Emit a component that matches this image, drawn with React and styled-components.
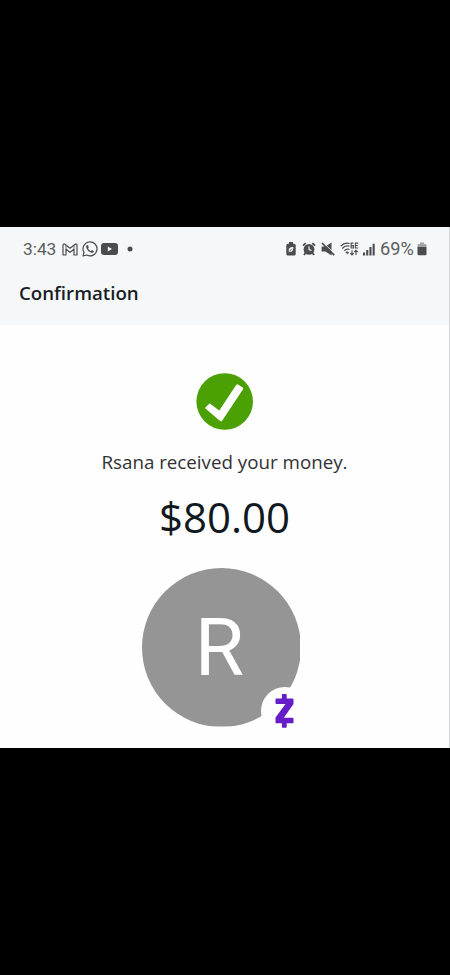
import React from "react";
import styled, { createGlobalStyle } from "styled-components";

const GlobalStyle = createGlobalStyle`
  * {
    box-sizing: border-box;
  }
  body {
    margin: 0;
    background: #000;
    font-family: "Open Sans", "Noto Sans", sans-serif;
  }
`;

const StyledPage = styled.div`
  display: flex;
  flex-direction: column;
  height: 975px;
  padding: 227px 0;
  background: #000;
`;

const StyledScreen = styled.section`
  display: flex;
  flex-direction: column;
  flex: 1;
  min-height: 0;
  background: #fefefe;
  border-right: 1px solid #d3d6d8;
`;

const StyledHeader = styled.header`
  flex: none;
  height: 98px;
  background: #f5f7f9;
`;

const StyledStatusBar = styled.div`
  display: flex;
  justify-content: space-between;
  height: 44px;
  padding: 0 22px 0 23px;
`;

const StyledGroup = styled.div`
  display: flex;
  align-items: center;
`;

const StyledStatusText = styled.span`
  width: ${({ $width }) => $width}px;
  margin-right: ${({ $gap }) => $gap}px;
  color: #5c5d60;
  font-family: Roboto, sans-serif;
  font-size: ${({ $size }) => $size}px;
  line-height: 20px;
  white-space: nowrap;
`;

const StyledIcon = styled.svg`
  display: block;
  flex: none;
  margin-right: ${({ $gap = 0 }) => $gap}px;
  color: #4b4c4f;
`;

const StyledTitle = styled.h1`
  margin: 9px 0 0 19px;
  color: #191d26;
  font-size: 18.7px;
  font-weight: 600;
  line-height: 26px;
`;

const StyledContent = styled.main`
  display: flex;
  flex-direction: column;
  align-items: center;
  padding-top: 48px;
`;

const StyledMessage = styled.p`
  margin: 19px 0 0;
  color: #303135;
  font-size: 18.75px;
  line-height: 26px;
  white-space: nowrap;
`;

const StyledAmount = styled.p`
  margin: 13px 0 0;
  color: #111820;
  font-size: 42px;
  line-height: 58px;
`;

const StyledAvatar = styled.div`
  position: relative;
  width: 159px;
  height: 159px;
  margin: 22px 7px 0 0;
`;

const StyledInitial = styled.div`
  display: flex;
  align-items: center;
  justify-content: center;
  width: 159px;
  height: 159px;
  padding: 1px 3px 0 0;
  border-radius: 50%;
  clip-path: inset(0 0.5px 0.5px 0);
  background: #959595;
  color: #fff;
  font-family: Roboto, sans-serif;
  font-size: 80px;
  line-height: 94px;
`;

const StyledBadge = styled.div`
  position: absolute;
  left: 119px;
  top: 119px;
  display: flex;
  align-items: center;
  justify-content: center;
  width: 48px;
  height: 48px;
  border-radius: 50%;
  background: #fefefe;
`;

function GmailIcon() {
  return (
    <StyledIcon $gap={4} width="16" height="13" viewBox="0 0 16 13" fill="none" stroke="currentColor" strokeWidth="1.2" strokeLinejoin="round">
      <path d="M1 2.2Q1 .6 2.5 1L8 5.2 13.5 1Q15 .6 15 2.2V12H12V6.3L8 9.3 4 6.3V12H1Z" />
      <path d="M4 2.2V6.3M12 2.2V6.3" strokeWidth=".8" />
    </StyledIcon>
  );
}

function WhatsAppIcon() {
  return (
    <StyledIcon $gap={3} width="16" height="16" viewBox="0 0 16 16" fill="none">
      <path d="M1 15 2 11.4A7 7 0 1 1 4.7 14Z" stroke="currentColor" strokeWidth="1.2" strokeLinejoin="round" />
      <path d="M5.4 4.1C4.8 4 4.1 5 4.2 6.1 4.6 8.7 7.1 11.4 9.8 11.8 11 11.9 12 11 11.9 10.2L10 9.1 9 10.1C7.9 9.7 6.6 8.4 6.1 7.2L6.8 6.3 6.1 4.4Z" fill="currentColor" />
    </StyledIcon>
  );
}

function YouTubeIcon() {
  return (
    <StyledIcon $gap={9} width="17" height="12" viewBox="0 0 17 12">
      <rect width="17" height="12" rx="3" fill="currentColor" />
      <path d="M6.8 3.5V8.5L11 6Z" fill="#f5f7f9" />
    </StyledIcon>
  );
}

function DotIcon() {
  return (
    <StyledIcon width="6" height="6" viewBox="0 0 6 6">
      <circle cx="3" cy="3" r="2.5" fill="currentColor" />
    </StyledIcon>
  );
}

function BatterySaverIcon() {
  return (
    <StyledIcon $gap={6} width="10" height="14" viewBox="0 0 10 14">
      <path d="M3 0H7V1.8H8.2Q9.7 1.8 9.7 3.3V12Q9.7 13.5 8.2 13.5H1.8Q.3 13.5.3 12V3.3Q.3 1.8 1.8 1.8H3Z" fill="currentColor" />
      <path d="M2.8 8.7C2.2 6.3 4 5.2 7.4 5 7.4 8.6 6.1 10.4 3.7 9.6L2.7 10.7Z" fill="#f5f7f9" />
      <path d="M3.5 9.2 5.8 6.8" stroke="currentColor" strokeWidth=".7" />
    </StyledIcon>
  );
}

function AlarmIcon() {
  return (
    <StyledIcon $gap={5} width="14" height="14" viewBox="0 0 14 14">
      <circle cx="7" cy="7.4" r="5.4" fill="currentColor" />
      <path d="M1 3.7 3.7 1.2M10.3 1.2 13 3.7M3.4 11 2 13M10.6 11 12 13" stroke="currentColor" strokeWidth="1.8" />
      <path d="M7 4.3V7.6L9.5 8.5" stroke="#f5f7f9" strokeWidth="1.1" fill="none" />
    </StyledIcon>
  );
}

function MuteIcon() {
  return (
    <StyledIcon $gap={5} width="14" height="14" viewBox="0 0 14 14">
      <path d="M.6 4.6H4.4L10.5.6V13.4L4.4 9.6H.6Z" fill="currentColor" />
      <path d="M2.2.6 14 12" stroke="#f5f7f9" strokeWidth="1" />
      <path d="M1 1 13.2 13.2" stroke="currentColor" strokeWidth="1.7" />
    </StyledIcon>
  );
}

function WifiIcon() {
  return (
    <StyledIcon $gap={4} width="19" height="16" viewBox="0 0 19 16">
      <g fill="none" stroke="currentColor" strokeWidth="1.2">
        <path d="M.7 5.2C3.2 2.4 6.4 1.5 9.6 2.5M2.3 7.5C4.4 5.1 7 4.5 9.5 5.3M4.2 9.8C5.8 8.2 7.7 7.8 9.5 8.5" />
        <path d="M13.4 2.1H11.1V7H13.4V4.6H11.1M18.2 2.1H15.4V7H18.2M15.4 4.5H17.9" strokeWidth="1.1" />
        <path d="M12 9.2V14M10.2 12.2 12 14 13.8 12.2M16 14V9.2M14.2 11 16 9.2 17.8 11" strokeWidth="1.1" />
      </g>
      <path d="M5.4 11.2Q7.3 9.8 9.1 11.2L7.3 13.2Z" fill="currentColor" />
    </StyledIcon>
  );
}

function SignalIcon() {
  return (
    <StyledIcon $gap={5} width="12" height="13" viewBox="0 0 12 13" fill="currentColor">
      <path d="M0 9.5H2.1V12.5H0ZM3.2 7H5.3V12.5H3.2ZM6.4 4H8.5V12.5H6.4ZM9.6.8H11.7V12.5H9.6Z" />
    </StyledIcon>
  );
}

function BatteryIcon() {
  return (
    <StyledIcon width="10" height="14" viewBox="0 0 10 14">
      <path d="M3 .5H7V2H8.2Q9.5 2 9.5 3.3V5H.5V3.3Q.5 2 1.8 2H3Z" fill="#a3a4a6" />
      <path d="M.5 5H9.5V12Q9.5 13.3 8.2 13.3H1.8Q.5 13.3.5 12Z" fill="currentColor" />
    </StyledIcon>
  );
}

function SuccessIcon() {
  return (
    <StyledIcon width="57" height="57" viewBox="0 0 57 57">
      <circle cx="28.7" cy="28.5" r="28.3" fill="#4ba003" />
      <path d="M9.7 34.2 13 30.9Q13.7 30.3 14.5 30.9L23.3 37.6 40.3 11.8Q41 10.9 41.9 11.5L46.7 14.6Q47.6 15.3 47 16.2L26.1 47.7Q25.3 48.9 24.1 47.9L9.7 35.7Q8.9 35 9.7 34.2Z" fill="#fff" />
    </StyledIcon>
  );
}

function ZelleIcon() {
  return (
    <StyledIcon width="20" height="34" viewBox="0 0 20 34">
      <path d="M7.6 0H11Q11.7 0 11.7.7V4.4H17.6Q18.5 4.4 18.5 5.3V10L8.8 23.7H17.6Q18.5 23.7 18.5 24.6V28.4Q18.5 29.3 17.6 29.3H11.7V33.1Q11.7 33.8 11 33.8H7.6Q6.9 33.8 6.9 33.1V29.3H1.4Q.5 29.3.5 28.4V23.5L10.5 10H1.4Q.5 10 .5 9.1V5.3Q.5 4.4 1.4 4.4H6.9V.7Q6.9 0 7.6 0Z" fill="#651dc8" />
    </StyledIcon>
  );
}

export default function App() {
  return (
    <>
      <GlobalStyle />
      <StyledPage>
        <StyledScreen>
          <StyledHeader>
            <StyledStatusBar>
              <StyledGroup>
                <StyledStatusText $width={34} $gap={5} $size={17.3}>
                  3:43
                </StyledStatusText>
                <GmailIcon />
                <WhatsAppIcon />
                <YouTubeIcon />
                <DotIcon />
              </StyledGroup>
              <StyledGroup>
                <BatterySaverIcon />
                <AlarmIcon />
                <MuteIcon />
                <WifiIcon />
                <SignalIcon />
                <StyledStatusText $width={35} $gap={2} $size={18.2}>
                  69%
                </StyledStatusText>
                <BatteryIcon />
              </StyledGroup>
            </StyledStatusBar>
            <StyledTitle>Confirmation</StyledTitle>
          </StyledHeader>
          <StyledContent>
            <SuccessIcon />
            <StyledMessage>Rsana received your money.</StyledMessage>
            <StyledAmount>$80.00</StyledAmount>
            <StyledAvatar>
              <StyledInitial>R</StyledInitial>
              <StyledBadge>
                <ZelleIcon />
              </StyledBadge>
            </StyledAvatar>
          </StyledContent>
        </StyledScreen>
      </StyledPage>
    </>
  );
}
